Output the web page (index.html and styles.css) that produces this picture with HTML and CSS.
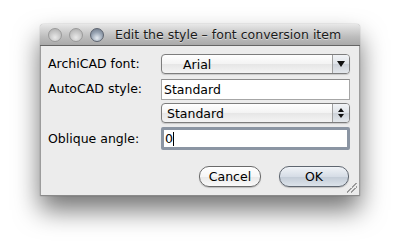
FILE: index.html
```html
<!DOCTYPE html>
<html>
<head>
<meta charset="utf-8">
<link rel="stylesheet" href="styles.css">
</head>
<body>
<div class="window">
  <div class="titlebar">
    <div class="lights">
      <span class="light"></span>
      <span class="light"></span>
      <span class="light active"></span>
    </div>
    <div class="title">Edit the style – font conversion item</div>
  </div>
  <div class="content">
    <div class="form">
      <div class="label">ArchiCAD font:</div>
      <div class="popup">
        <span class="popup-text indent">Arial</span>
        <span class="arrow"><span class="tri-down"></span></span>
      </div>
      <div class="label">AutoCAD style:</div>
      <div class="field">Standard</div>
      <div class="label"></div>
      <div class="popup">
        <span class="popup-text">Standard</span>
        <span class="arrow"><span class="tri-up"></span><span class="tri-down small"></span></span>
      </div>
      <div class="label">Oblique angle:</div>
      <div class="field focus">0<span class="caret"></span></div>
    </div>
    <div class="buttons">
      <div class="btn">Cancel</div>
      <div class="btn default">OK</div>
    </div>
    <div class="grip"></div>
  </div>
</div>
</body>
</html>
```
FILE: styles.css
```css
* { box-sizing: border-box; }
html, body { margin: 0; padding: 0; background: #ffffff; }
body {
  width: 400px;
  height: 251px;
  overflow: hidden;
  font-family: "DejaVu Sans", "Lucida Grande", sans-serif;
  font-size: 12.5px;
  color: #000;
}
.window {
  margin: 24px 0 0 40px;
  width: 320px;
  height: 172px;
  display: flex;
  flex-direction: column;
  background: #ececec;
  border-radius: 4px 4px 0 0;
  box-shadow: 0 14px 26px rgba(0,0,0,0.55), 0 0 1px rgba(0,0,0,0.5);
}
.titlebar {
  height: 22px;
  flex: none;
  display: flex;
  align-items: center;
  border-radius: 4px 4px 0 0;
  background: linear-gradient(#e8e8e8, #bdbdbd 60%, #a9a9a9);
  border-bottom: 1px solid #646464;
}
.lights {
  display: flex;
  gap: 7px;
  padding-left: 8px;
}
.light {
  width: 14px;
  height: 14px;
  border-radius: 50%;
  background: radial-gradient(circle at 50% 70%, #e9e9e9, #c2c2c2 60%, #a8a8a8);
  border: 1px solid #9a9a9a;
}
.light.active {
  background: radial-gradient(circle at 50% 75%, #e6ecf2, #95a1b0 55%, #6b7584);
  border-color: #5d6470;
}
.title {
  margin-left: 11px;
  font-size: 12.5px;
  color: #1a1a1a;
  text-shadow: 0 1px 0 rgba(255,255,255,0.5);
  white-space: nowrap;
}
.content {
  flex: 1;
  position: relative;
  padding: 8px 10px 0 7px;
  display: flex;
  flex-direction: column;
  border-left: 1px solid #9c9c9c;
  border-right: 1px solid #9c9c9c;
  border-bottom: 1px solid #8a8a8a;
}
.form {
  display: grid;
  grid-template-columns: 113px 189px;
  grid-template-rows: 20px 21px 20px 23px;
  row-gap: 4px;
  align-items: center;
}
.form > .field:nth-child(4) { margin-top: 1px; }
.label {
  white-space: nowrap;
  padding-bottom: 1px;
}
.popup {
  height: 20px;
  display: flex;
  align-items: stretch;
  border: 1px solid #7d7d7d;
  border-radius: 4px;
  background: linear-gradient(#ffffff, #f3f3f3 50%, #e6e6e6 51%, #f4f4f4);
  box-shadow: 0 1px 1px rgba(0,0,0,0.15);
  overflow: hidden;
}
.popup-text {
  flex: 1;
  display: flex;
  align-items: center;
  padding-left: 5px;
}
.popup-text.indent { padding-left: 21px; }
.arrow {
  width: 17px;
  flex: none;
  display: flex;
  flex-direction: column;
  align-items: center;
  justify-content: center;
  gap: 2px;
  border-left: 1px solid #a0a0a0;
  background: linear-gradient(#f2f4f7, #dfe3e8 50%, #cdd2d9 51%, #e4e8ec);
}
.tri-down {
  width: 0; height: 0;
  border-left: 4px solid transparent;
  border-right: 4px solid transparent;
  border-top: 6px solid #111;
}
.tri-down.small { border-left-width: 3px; border-right-width: 3px; border-top-width: 4px; }
.tri-up {
  width: 0; height: 0;
  border-left: 3px solid transparent;
  border-right: 3px solid transparent;
  border-bottom: 4px solid #111;
}
.field {
  height: 21px;
  background: #fff;
  border: 1px solid #a6a6a6;
  border-top-color: #8c8c8c;
  padding-left: 2px;
  display: flex;
  align-items: center;
}
.field.focus {
  height: 23px;
  border: 3px solid #8b95a3;
  border-radius: 2px;
  padding-left: 1px;
}
.caret {
  display: inline-block;
  width: 1px;
  height: 14px;
  background: #000;
}
.buttons {
  display: flex;
  justify-content: flex-end;
  gap: 18px;
  margin-top: 16px;
}
.btn {
  height: 21px;
  border: 1px solid #6a6a6a;
  border-radius: 10px;
  background: linear-gradient(#ffffff, #f6f6f6 50%, #e8e8e8 51%, #fafafa);
  box-shadow: 0 1px 1px rgba(0,0,0,0.2);
  display: flex;
  align-items: center;
  justify-content: center;
  width: 62px;
}
.btn.default {
  width: 70px;
  background: linear-gradient(#f0f3f7, #d6dde6 50%, #c2cbd6 51%, #dce3ea);
  border-color: #5f6670;
}
.grip {
  position: absolute;
  right: 2px;
  bottom: 2px;
  width: 10px;
  height: 10px;
  background:
    linear-gradient(135deg, transparent 45%, #9a9a9a 45%, #9a9a9a 52%, transparent 52%, transparent 65%, #9a9a9a 65%, #9a9a9a 72%, transparent 72%);
}
```
